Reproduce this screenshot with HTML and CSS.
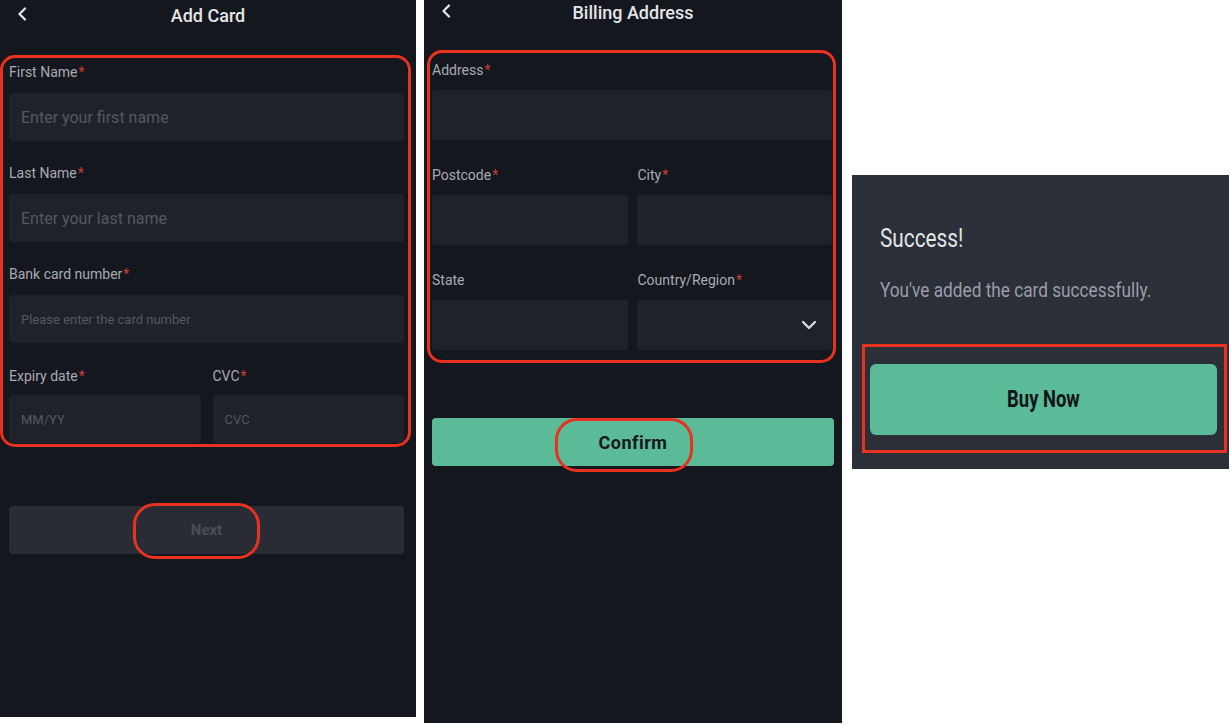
FILE: index.html
```html
<!DOCTYPE html>
<html>
<head>
    <title>Add Card</title>
    <link rel="stylesheet" href="styles.css">
</head>
<body>
    <div class="board">
        <!-- step 1: card details -->
        <section class="screen screen-card">
            <header class="topbar">
                <svg class="back" viewBox="0 0 10 14" width="10" height="14"><polyline points="8,1.5 2.5,7 8,12.5" /></svg>
                <h1>Add Card</h1>
            </header>
            <div class="form-block">
                <div class="field">
                    <label>First Name<span class="req">*</span></label>
                    <input class="input" type="text" placeholder="Enter your first name">
                </div>
                <div class="field">
                    <label>Last Name<span class="req">*</span></label>
                    <input class="input" type="text" placeholder="Enter your last name">
                </div>
                <div class="field">
                    <label>Bank card number<span class="req">*</span></label>
                    <input class="input small" type="text" placeholder="Please enter the card number">
                </div>
                <div class="row">
                    <div class="field">
                        <label>Expiry date<span class="req">*</span></label>
                        <input class="input small" type="text" placeholder="MM/YY">
                    </div>
                    <div class="field">
                        <label>CVC<span class="req">*</span></label>
                        <input class="input small" type="text" placeholder="CVC">
                    </div>
                </div>
            </div>
            <button class="btn btn-muted">Next<span class="mark"></span></button>
        </section>

        <!-- step 2: billing address -->
        <section class="screen screen-billing">
            <header class="topbar">
                <svg class="back" viewBox="0 0 10 14" width="10" height="14"><polyline points="8,1.5 2.5,7 8,12.5" /></svg>
                <h1>Billing Address</h1>
            </header>
            <div class="form-block">
                <div class="field">
                    <label>Address<span class="req">*</span></label>
                    <input class="input" type="text">
                </div>
                <div class="row">
                    <div class="field">
                        <label>Postcode<span class="req">*</span></label>
                        <input class="input" type="text">
                    </div>
                    <div class="field">
                        <label>City<span class="req">*</span></label>
                        <input class="input" type="text">
                    </div>
                </div>
                <div class="row">
                    <div class="field">
                        <label>State</label>
                        <input class="input" type="text">
                    </div>
                    <div class="field">
                        <label>Country/Region<span class="req">*</span></label>
                        <div class="input select">
                            <svg viewBox="0 0 16 10" width="16" height="10"><polyline points="2,2 8,8 14,2" /></svg>
                        </div>
                    </div>
                </div>
            </div>
            <button class="btn btn-green">Confirm<span class="mark"></span></button>
        </section>

        <!-- step 3: result -->
        <section class="dialog">
            <h2><span class="narrow">Success!</span></h2>
            <p><span class="narrow">You've added the card successfully.</span></p>
            <div class="dialog-action">
                <button class="btn btn-green btn-big"><span class="narrow">Buy Now</span></button>
            </div>
        </section>
    </div>
</body>
</html>
```

FILE: styles.css
```css
body {
    margin: 0;
    background-color: #fff;
    font-family: Roboto, "Noto Sans", sans-serif;
}

.board {
    display: flex;
    align-items: flex-start;
}

.screen {
    background-color: #15171e;
    color: #a7abb3;
}

.screen-card {
    width: 416px;
    height: 717px;
    margin-right: 8px;
}

.screen-billing {
    width: 418px;
    height: 723px;
    margin-right: 10px;
}

.topbar {
    position: relative;
    display: flex;
    justify-content: center;
    align-items: center;
    height: 30px;
    margin-bottom: 25px;
}

.topbar h1 {
    margin: 0;
    font-size: 18px;
    font-weight: 500;
    color: #e4e5e8;
}

.back {
    position: absolute;
    left: 17px;
    top: 7px;
    fill: none;
    stroke: #e4e5e8;
    stroke-width: 2.2;
    stroke-linecap: round;
    stroke-linejoin: round;
}

.screen-billing .topbar {
    height: 25px;
    margin-bottom: 25px;
}

.screen-billing .back {
    top: 4px;
}

/* red highlight around the fields */
.form-block {
    border: 3px solid #e8311f;
    border-radius: 15px;
}

.screen-card .form-block {
    margin-right: 5px;
    padding: 4px 4px 1px 6px;
}

.screen-billing .form-block {
    margin: 0 6px 0 3px;
    padding: 7px 1px 10px 2px;
}

.field {
    display: flex;
    flex-direction: column;
    min-width: 0;
}

.field label {
    font-size: 14px;
    line-height: 20px;
    margin-bottom: 11px;
}

.req {
    color: #c9403a;
    margin-left: 1px;
}

.input {
    box-sizing: border-box;
    height: 48px;
    margin-bottom: 22px;
    padding: 0 12px;
    border: none;
    border-radius: 4px;
    background-color: #1f2229;
    color: #ccc;
    font-family: inherit;
    font-size: 16px;
    outline: none;
}

.input::placeholder {
    color: #545862;
}

.input.small {
    font-size: 13px;
}

.screen-card .row {
    margin-top: 1px;
}

.screen-card .row label {
    margin-bottom: 9px;
}

.screen-card .row .input {
    margin-bottom: 0;
}

.row {
    display: grid;
    grid-template-columns: 1fr 1fr;
    column-gap: 12px;
}

.screen-billing .field label {
    margin-bottom: 10px;
}

.screen-billing .input {
    height: 50px;
    margin-bottom: 25px;
    border-radius: 3px;
}

.screen-billing .row {
    column-gap: 9px;
}

.screen-billing .row .field:last-child label {
    margin-left: 1px;
}

.screen-billing .row:last-child .input {
    margin-bottom: 0;
}

.select {
    display: flex;
    align-items: center;
    justify-content: flex-end;
    padding-right: 15px;
}

.select svg {
    fill: none;
    stroke: #d8dade;
    stroke-width: 2.4;
    stroke-linecap: round;
    stroke-linejoin: round;
}

.btn {
    position: relative;
    display: block;
    height: 48px;
    border: none;
    border-radius: 4px;
    font-family: inherit;
    font-weight: 700;
}

.btn-muted {
    width: 395px;
    margin: 59px 0 0 9px;
    background-color: #292c35;
    color: #4a4d58;
    font-size: 15px;
}

.btn-green {
    background-color: #5bbb98;
    color: #15181c;
}

.screen-billing .btn-green {
    width: 402px;
    margin: 55px 0 0 8px;
    font-size: 18px;
    letter-spacing: 0.5px;
}

/* red marker pill drawn over the button label */
.mark {
    position: absolute;
    border: 3px solid #e8311f;
    border-radius: 22px;
}

.btn-muted .mark {
    left: 124px;
    top: -3px;
    width: 121px;
    height: 50px;
}

.btn-green .mark {
    left: 123px;
    top: 0;
    width: 132px;
    height: 48px;
}

.dialog {
    box-sizing: border-box;
    width: 377px;
    height: 294px;
    margin-top: 175px;
    padding: 47px 0 0 28px;
    background-color: #2b2f38;
    font-family: Roboto, sans-serif;
}

/* the dialog uses a tall condensed face */
.narrow {
    display: inline-block;
    transform: scaleX(0.8);
    transform-origin: left center;
}

.dialog h2 {
    margin: 0;
    font-size: 26px;
    font-weight: 400;
    line-height: 32px;
    color: #e2e4e8;
}

.dialog p {
    margin: 23px 0 0;
    font-size: 21px;
    line-height: 26px;
    color: #9a9ea7;
}

.dialog p .narrow {
    transform: scaleX(0.82);
}

.dialog-action {
    box-sizing: border-box;
    width: 365px;
    height: 109px;
    margin: 41px 0 0 -18px;
    padding: 17px 7px 0 5px;
    border: 3px solid #e8311f;
}

.btn-big {
    width: 100%;
    height: 71px;
    border-radius: 6px;
    font-size: 23px;
    color: #111418;
}

.btn-big .narrow {
    transform-origin: center;
}
```
